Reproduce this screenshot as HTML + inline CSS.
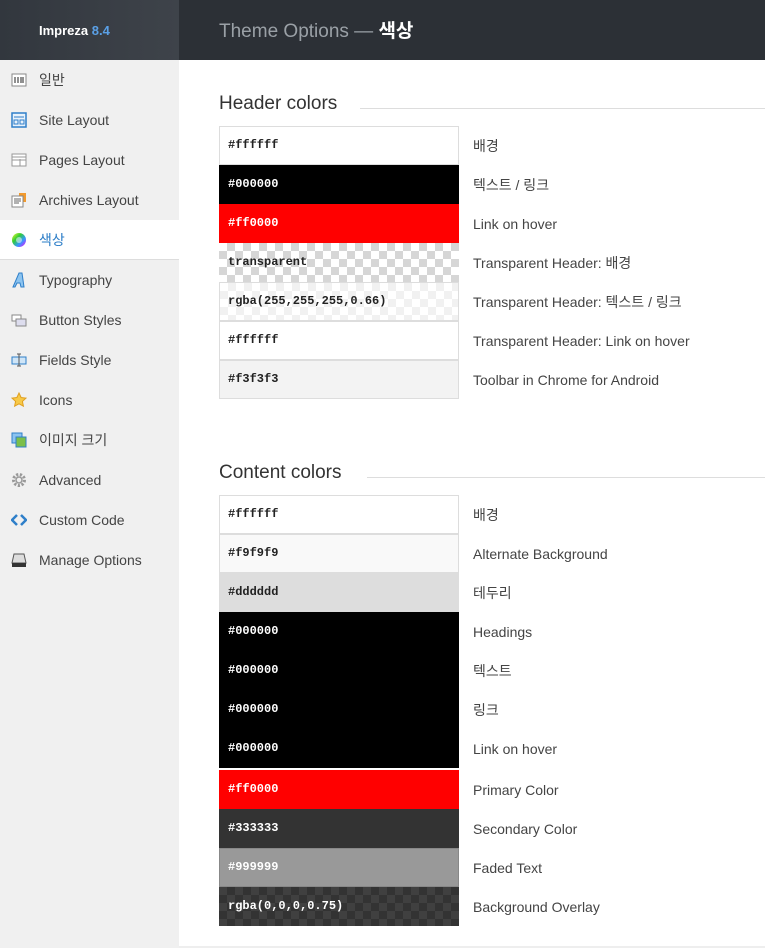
<!DOCTYPE html>
<html><head><meta charset="utf-8"><style>
*{box-sizing:border-box;margin:0;padding:0}
body{width:765px;height:948px;overflow:hidden;background:#fff;font-family:"Liberation Sans","Noto Sans CJK KR",sans-serif;position:relative}
.sb{position:absolute;left:0;top:0;width:179px;height:948px;background:#f0f0f0}
.logo{height:60px;background:linear-gradient(90deg,#32373e,#3e434a);color:#fff;font-weight:bold;font-size:13px;line-height:62px;padding-left:39px}
.logo span{color:#5aa0e6}
.top{position:absolute;left:179px;top:0;right:0;height:60px;background:#2c3036;color:#9aa0a6;font-size:19px;line-height:63px;padding-left:40px}
.top b{color:#fff}
.it{height:40px;line-height:40px;font-size:14px;color:#444;padding-left:39px;position:relative}
.it.on{background:#fff;color:#2a7cc7;border-bottom:1px solid #ddd}
.ic{position:absolute;left:11px;top:12px;width:16px;height:16px}
h2{position:absolute;left:219px;font-size:19px;font-weight:normal;color:#333;background:#fff;padding-right:14px}
.hl{position:absolute;right:0;height:1px;background:#ddd}
.row{position:absolute;left:219px;width:240px;height:39px;font-family:"Liberation Mono",monospace;font-weight:bold;font-size:12px;line-height:39px;padding-left:9px;color:#222}
.b{border:1px solid #ddd;padding-left:8px;line-height:37px}
.w{color:#fff}
.lb{position:absolute;left:473px;font-size:14px;color:#444;line-height:41px}
.ck{background-color:#fff;background-image:linear-gradient(45deg,#d6d6d6 25%,transparent 25%,transparent 75%,#d6d6d6 75%),linear-gradient(45deg,#d6d6d6 25%,transparent 25%,transparent 75%,#d6d6d6 75%);background-size:16px 16px;background-position:0 0,8px 8px}
.ck2{background-color:#fff;background-image:linear-gradient(45deg,#f1f1f1 25%,transparent 25%,transparent 75%,#f1f1f1 75%),linear-gradient(45deg,#f1f1f1 25%,transparent 25%,transparent 75%,#f1f1f1 75%);background-size:16px 16px;background-position:0 0,8px 8px}
.ck3{background-color:#404040;background-image:linear-gradient(45deg,#333 25%,transparent 25%,transparent 75%,#333 75%),linear-gradient(45deg,#333 25%,transparent 25%,transparent 75%,#333 75%);background-size:16px 16px;background-position:0 0,8px 8px}
</style></head><body>
<div class="sb">
<div class="logo">Impreza <span>8.4</span></div>
<div class="it"><svg class="ic" viewBox="0 0 16 16"><rect x="1" y="2" width="14" height="12" fill="#fff" stroke="#888"/><path d="M4 5v6M7 5v6M10 5v6M12 5v6" stroke="#555" stroke-width="1.3"/></svg>일반</div>
<div class="it"><svg class="ic" viewBox="0 0 16 16"><rect x="1" y="1" width="14" height="14" fill="#e8f2fb" stroke="#2f7fc9" stroke-width="1.5"/><path d="M3 5h10M3 8h4v4H3zM9 8h4v4H9z" stroke="#2f7fc9" fill="none"/></svg>Site Layout</div>
<div class="it"><svg class="ic" viewBox="0 0 16 16"><rect x="1" y="2" width="14" height="12" fill="#fff" stroke="#999"/><path d="M1 5h14M9 7v7M1 8h14" stroke="#999"/></svg>Pages Layout</div>
<div class="it"><svg class="ic" viewBox="0 0 16 16"><rect x="8" y="1" width="7" height="9" fill="#f29a2e"/><rect x="1" y="4" width="11" height="11" fill="#fff" stroke="#888"/><path d="M3 7h7M3 9h7M3 11h5" stroke="#666"/></svg>Archives Layout</div>
<div class="it on"><svg class="ic" viewBox="0 0 16 16"><defs><linearGradient id="g" x1="0" y1="0" x2="1" y2="1"><stop offset="0" stop-color="#ff3"/><stop offset=".35" stop-color="#3c3"/><stop offset=".65" stop-color="#39f"/><stop offset="1" stop-color="#f0f"/></linearGradient></defs><circle cx="8" cy="8" r="7" fill="url(#g)"/><circle cx="8" cy="8" r="3" fill="#fff" opacity=".5"/></svg>색상</div>
<div class="it"><svg class="ic" viewBox="0 0 16 16"><path d="M2 15L8 1h3l2 14h-3l-1-4H6l-2 4z" fill="#8cc4f0" stroke="#2f7fc9"/></svg>Typography</div>
<div class="it"><svg class="ic" viewBox="0 0 16 16"><rect x="1" y="3" width="9" height="6" fill="#fff" stroke="#888"/><rect x="5" y="7" width="10" height="7" fill="#dde" stroke="#888"/></svg>Button Styles</div>
<div class="it"><svg class="ic" viewBox="0 0 16 16"><rect x="1" y="5" width="14" height="7" fill="#cfe5f7" stroke="#2f7fc9"/><path d="M8 2v12M6 2h4M6 14h4" stroke="#555"/></svg>Fields Style</div>
<div class="it"><svg class="ic" viewBox="0 0 16 16"><path d="M8 1l2.1 4.5 4.9.6-3.6 3.3 1 4.8L8 11.8 3.6 14.2l1-4.8L1 6.1l4.9-.6z" fill="#f7c948" stroke="#e0a020"/></svg>Icons</div>
<div class="it"><svg class="ic" viewBox="0 0 16 16"><rect x="1" y="1" width="10" height="10" fill="#8cc4f0" stroke="#2f7fc9"/><rect x="5" y="5" width="10" height="10" fill="#7bbf4a" stroke="#2f7fc9"/></svg>이미지 크기</div>
<div class="it"><svg class="ic" viewBox="0 0 16 16"><circle cx="8" cy="8" r="5.5" fill="none" stroke="#999" stroke-width="3" stroke-dasharray="2.2 1.6"/><circle cx="8" cy="8" r="3" fill="none" stroke="#999" stroke-width="1.5"/></svg>Advanced</div>
<div class="it"><svg class="ic" viewBox="0 0 16 16"><path d="M6 3L1 8l5 5M10 3l5 5-5 5" fill="none" stroke="#2f7fc9" stroke-width="2.5"/></svg>Custom Code</div>
<div class="it"><svg class="ic" viewBox="0 0 16 16"><path d="M3 2h10l2 9H1z" fill="#ddd" stroke="#555"/><rect x="1" y="11" width="14" height="4" fill="#333"/></svg>Manage Options</div>
</div>
<div class="top">Theme Options — <b>색상</b></div>

<div class="hl" style="left:360px;top:108px;width:405px"></div>
<h2 style="top:93px">Header colors</h2>
<div class="row b" style="top:126px">#ffffff</div><div class="lb" style="top:126px">배경</div>
<div class="row w" style="top:165px;background:#000">#000000</div><div class="lb" style="top:165px">텍스트 / 링크</div>
<div class="row w" style="top:204px;background:#f00">#ff0000</div><div class="lb" style="top:204px">Link on hover</div>
<div class="row ck" style="top:243px">transparent</div><div class="lb" style="top:243px">Transparent Header: 배경</div>
<div class="row ck2 b" style="top:282px">rgba(255,255,255,0.66)</div><div class="lb" style="top:282px">Transparent Header: 텍스트 / 링크</div>
<div class="row b" style="top:321px">#ffffff</div><div class="lb" style="top:321px">Transparent Header: Link on hover</div>
<div class="row b" style="top:360px;background:#f3f3f3">#f3f3f3</div><div class="lb" style="top:360px">Toolbar in Chrome for Android</div>

<div class="hl" style="left:367px;top:477px;width:398px"></div>
<h2 style="top:462px">Content colors</h2>
<div class="row b" style="top:495px">#ffffff</div><div class="lb" style="top:495px">배경</div>
<div class="row b" style="top:534px;background:#f9f9f9">#f9f9f9</div><div class="lb" style="top:534px">Alternate Background</div>
<div class="row b" style="top:573px;background:#ddd">#dddddd</div><div class="lb" style="top:573px">테두리</div>
<div class="row w" style="top:612px;background:#000">#000000</div><div class="lb" style="top:612px">Headings</div>
<div class="row w" style="top:651px;background:#000">#000000</div><div class="lb" style="top:651px">텍스트</div>
<div class="row w" style="top:690px;background:#000">#000000</div><div class="lb" style="top:690px">링크</div>
<div class="row w" style="top:729px;background:#000">#000000</div><div class="lb" style="top:729px">Link on hover</div>
<div class="row w" style="top:770px;background:#f00">#ff0000</div><div class="lb" style="top:770px">Primary Color</div>
<div class="row w" style="top:809px;background:#333">#333333</div><div class="lb" style="top:809px">Secondary Color</div>
<div class="row w" style="top:848px;background:#999;border:1px solid #888;padding-left:8px;line-height:37px">#999999</div><div class="lb" style="top:848px">Faded Text</div>
<div class="row w ck3" style="top:887px">rgba(0,0,0,0.75)</div><div class="lb" style="top:887px">Background Overlay</div>
<div style="position:absolute;left:179px;right:0;top:946px;height:2px;background:#eee"></div>
</body></html>
